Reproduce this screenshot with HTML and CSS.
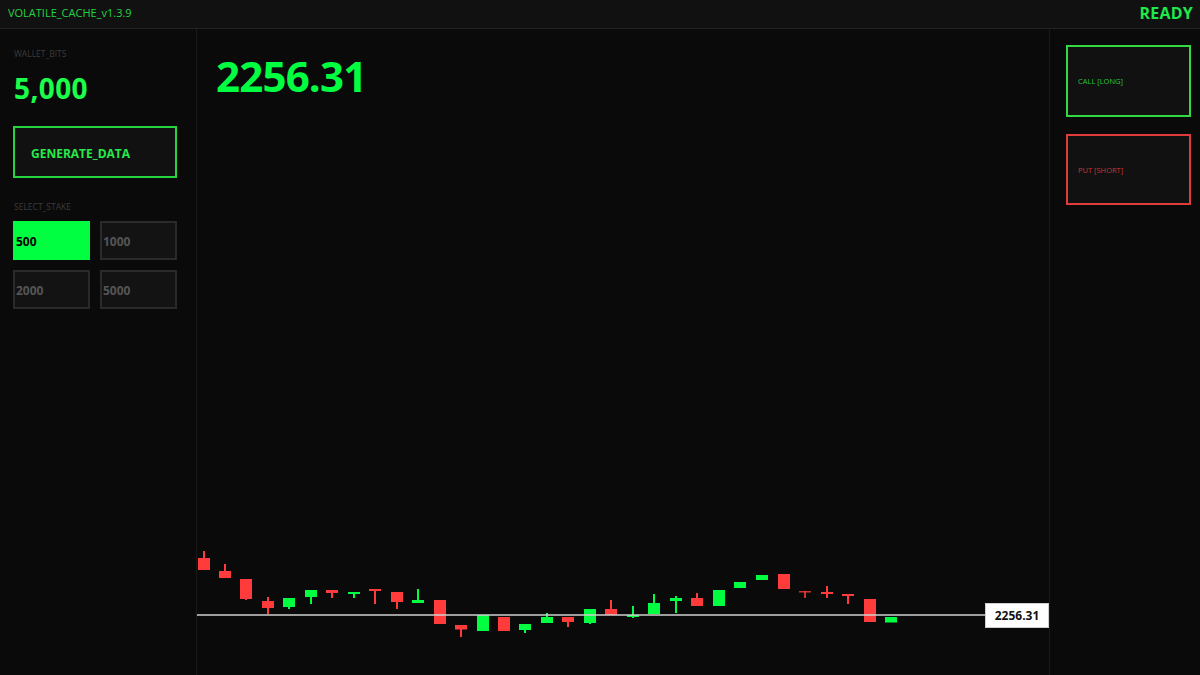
FILE: index.html
```html
<!DOCTYPE html>
<html>
<head>
<meta charset="utf-8">
<title>VOLATILE_CACHE</title>
<link rel="stylesheet" href="styles.css">
</head>
<body>
<header class="topbar">
  <div class="brand">VOLATILE_CACHE_v1.3.9</div>
  <div class="status">READY</div>
</header>
<main class="layout">
  <aside class="side">
    <div class="label">WALLET_BITS</div>
    <div class="wallet">5,000</div>
    <button class="gen">GENERATE_DATA</button>
    <div class="label stake-label">SELECT_STAKE</div>
    <div class="stakes">
      <button class="stake active">500</button>
      <button class="stake">1000</button>
      <button class="stake">2000</button>
      <button class="stake">5000</button>
    </div>
  </aside>
  <section class="chart">
    <div class="price">2256.31</div>
    <svg class="plot" viewBox="197 29 852 646" preserveAspectRatio="none" xmlns="http://www.w3.org/2000/svg">
      <g fill="#ff3b3b">
        <rect x="203" y="551" width="2" height="19"/><rect x="198" y="558" width="12" height="12"/>
        <rect x="224" y="564" width="2" height="10"/><rect x="219" y="571" width="12" height="7"/>
        <rect x="245" y="590" width="2" height="10"/><rect x="240" y="579" width="12" height="20"/>
        <rect x="267" y="597" width="2" height="17"/><rect x="262" y="601" width="12" height="7"/>
        <rect x="331" y="590" width="2" height="8"/><rect x="326" y="590" width="12" height="3"/>
        <rect x="374" y="589" width="2" height="15"/><rect x="369" y="589" width="12" height="2"/>
        <rect x="396" y="595" width="2" height="14"/><rect x="391" y="592" width="12" height="10"/>
        <rect x="434" y="600" width="12" height="24"/>
        <rect x="460" y="627" width="2" height="10"/><rect x="455" y="625" width="12" height="4.5"/>
        <rect x="498" y="617" width="12" height="14"/>
        <rect x="567" y="619" width="2" height="8"/><rect x="562" y="617" width="12" height="5"/>
        <rect x="610" y="600" width="2" height="10"/><rect x="605" y="609" width="12" height="6"/>
        <rect x="696" y="593" width="2" height="8"/><rect x="691" y="598" width="12" height="8"/>
        <rect x="778" y="574" width="12" height="15"/>
        <rect x="804" y="591" width="2" height="7" opacity="0.8"/><rect x="799" y="591" width="12" height="1.5" opacity="0.8"/>
        <rect x="826" y="586" width="2" height="12"/><rect x="821" y="592" width="12" height="2"/>
        <rect x="847" y="594" width="2" height="10"/><rect x="842" y="594" width="12" height="2"/>
        <rect x="864" y="599" width="12" height="23"/>
      </g>
      <g fill="#00ff41">
        <rect x="288" y="600" width="2" height="9"/><rect x="283" y="598" width="12" height="9"/>
        <rect x="310" y="594" width="2" height="10"/><rect x="305" y="590" width="12" height="7"/>
        <rect x="353" y="592" width="2" height="6"/><rect x="348" y="592" width="12" height="2"/>
        <rect x="417" y="589" width="2" height="12"/><rect x="412" y="600" width="12" height="3"/>
        <rect x="477" y="615" width="12" height="16"/>
        <rect x="524" y="626" width="2" height="7"/><rect x="519" y="624" width="12" height="6"/>
        <rect x="546" y="613" width="2" height="6"/><rect x="541" y="617" width="12" height="6"/>
        <rect x="589" y="615" width="2" height="9"/><rect x="584" y="609" width="12" height="14"/>
        <rect x="632" y="606" width="2" height="12"/><rect x="627" y="615" width="12" height="2"/>
        <rect x="653" y="594" width="2" height="10"/><rect x="648" y="603" width="12" height="11"/>
        <rect x="675" y="596" width="2" height="17"/><rect x="670" y="598" width="12" height="3"/>
        <rect x="713" y="590" width="12" height="16"/>
        <rect x="734" y="582" width="12" height="6"/>
        <rect x="756" y="575" width="12" height="5"/>
        <rect x="885" y="617" width="12" height="5.5"/>
      </g>
      <line x1="197" y1="615" x2="986" y2="615" stroke="#d0d0d0" stroke-width="1.3"/>
      <rect x="985.5" y="603.5" width="63" height="24" fill="#ffffff" stroke="#cfcfcf" stroke-width="1"/>
      <text x="1017" y="620" class="tag">2256.31</text>
    </svg>
  </section>
  <aside class="actions">
    <button class="act call">CALL [LONG]</button>
    <button class="act put">PUT [SHORT]</button>
  </aside>
</main>
</body>
</html>
```
FILE: styles.css
```css
* { box-sizing: border-box; }
html, body { margin: 0; padding: 0; }
body {
  width: 1200px;
  height: 675px;
  overflow: hidden;
  background: #0a0a0a;
  font-family: "Open Sans", "DejaVu Sans", sans-serif;
  color: #00ff41;
}
button { font-family: inherit; cursor: pointer; }

.topbar {
  height: 29px;
  background: #111111;
  border-bottom: 1px solid #232323;
  display: flex;
  align-items: center;
  justify-content: space-between;
  padding: 0 7px 3px 8px;
}
.brand { font-size: 11px; color: #22d443; }
.status { font-size: 16px; font-weight: 700; color: #1ee84a; letter-spacing: 0.2px; }

.layout {
  display: flex;
  height: 646px;
}

.side {
  width: 197px;
  flex: none;
  border-right: 1px solid #1a1a1a;
  padding: 19px 19px 0 13px;
  display: flex;
  flex-direction: column;
}
.label {
  font-size: 8.5px;
  line-height: 12px;
  color: #3c3c3c;
  padding-left: 1px;
}
.wallet {
  font-size: 28px;
  font-weight: 700;
  line-height: 32px;
  margin-top: 12px;
  padding-left: 1px;
  letter-spacing: 0.4px;
  color: #1aff4a;
}
.gen {
  margin-top: 22px;
  height: 52px;
  background: #111111;
  border: 2px solid #26d43f;
  color: #26ea4a;
  font-size: 12px;
  font-weight: 700;
  text-align: left;
  padding: 2px 0 0 16px;
}
.stake-label { margin-top: 23px; }
.stakes {
  margin-top: 8px;
  display: grid;
  grid-template-columns: 77px 77px;
  grid-auto-rows: 39px;
  gap: 10px;
}
.stake {
  background: #131313;
  border: 2px solid #2a2a2a;
  color: #555555;
  font-size: 12px;
  font-weight: 700;
  text-align: left;
  padding: 2px 0 0 1px;
}
.stake.active {
  background: #00ff41;
  border-color: #00ff41;
  color: #000000;
}

.chart {
  flex: 1;
  position: relative;
  padding: 23px 0 0 19px;
}
.price {
  position: relative;
  z-index: 1;
  font-size: 42px;
  font-weight: 700;
  line-height: 48px;
  letter-spacing: -0.8px;
  color: #00ff41;
}
.plot {
  position: absolute;
  left: 0;
  top: 0;
  width: 852px;
  height: 646px;
}
.tag {
  font-family: "Open Sans", "DejaVu Sans", sans-serif;
  font-size: 12px;
  font-weight: 700;
  fill: #111111;
  text-anchor: middle;
}

.actions {
  width: 151px;
  flex: none;
  border-left: 1px solid #1a1a1a;
  padding: 16px 9px 0 16px;
  display: flex;
  flex-direction: column;
  gap: 17px;
}
.act {
  height: 72px;
  background: #111111;
  font-size: 7.5px;
  text-align: left;
  padding: 0 0 0 10px;
}
.call { border: 2px solid #33d943; color: #2bc43b; }
.put { border: 2px solid #e03c3c; color: #c93636; height: 71px; }
```
